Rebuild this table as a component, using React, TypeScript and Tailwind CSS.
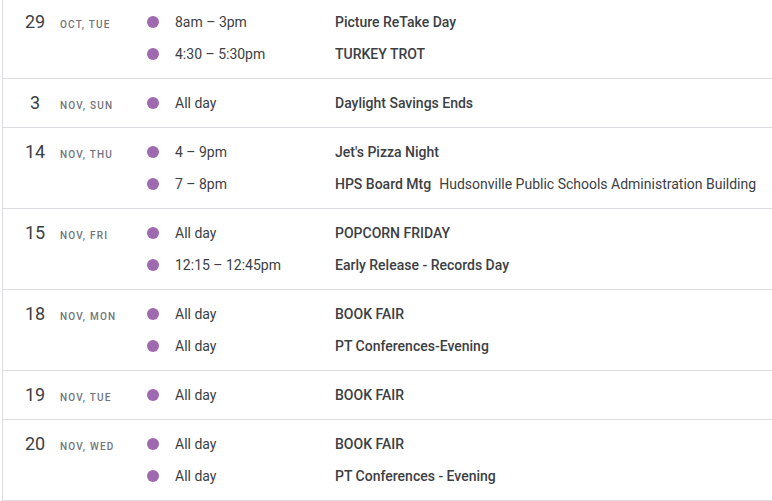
import React from "react";

type Ev = { time: string; title: string; location?: string };
type Day = { num: string; label: string; events: Ev[] };

const days: Day[] = [
  { num: "29", label: "Oct, Tue", events: [
    { time: "8am – 3pm", title: "Picture ReTake Day" },
    { time: "4:30 – 5:30pm", title: "TURKEY TROT" },
  ]},
  { num: "3", label: "Nov, Sun", events: [
    { time: "All day", title: "Daylight Savings Ends" },
  ]},
  { num: "14", label: "Nov, Thu", events: [
    { time: "4 – 9pm", title: "Jet's Pizza Night" },
    { time: "7 – 8pm", title: "HPS Board Mtg", location: "Hudsonville Public Schools Administration Building" },
  ]},
  { num: "15", label: "Nov, Fri", events: [
    { time: "All day", title: "POPCORN FRIDAY" },
    { time: "12:15 – 12:45pm", title: "Early Release - Records Day" },
  ]},
  { num: "18", label: "Nov, Mon", events: [
    { time: "All day", title: "BOOK FAIR" },
    { time: "All day", title: "PT Conferences-Evening" },
  ]},
  { num: "19", label: "Nov, Tue", events: [
    { time: "All day", title: "BOOK FAIR" },
  ]},
  { num: "20", label: "Nov, Wed", events: [
    { time: "All day", title: "BOOK FAIR" },
    { time: "All day", title: "PT Conferences - Evening" },
  ]},
];

export default function App() {
  return (
    <div className="w-[772px] h-[501px] overflow-hidden bg-white" style={{ fontFamily: "Roboto, 'Liberation Sans', sans-serif" }}>
      <div className="ml-[2px] -mt-[2px] border-l border-[#dadce0]">
        {days.map((d, i) => (
          <div key={i} className="flex border-b border-[#dadce0] py-2">
            <div className="w-[144px] shrink-0 flex items-baseline h-8 leading-8">
              <div className="ml-[19px] w-[26px] text-center text-[18px] text-[#3c4043]">{d.num}</div>
              <div className="ml-[12px] text-[10px] font-medium uppercase tracking-[1.2px] text-[#70757a]">{d.label}</div>
            </div>
            <div className="flex flex-col">
              {d.events.map((e, j) => (
                <div key={j} className="flex items-center h-8 text-[14px] text-[#3c4043]">
                  <div className="w-3 h-3 rounded-full bg-[#9e69af] shrink-0" />
                  <div className="ml-4 w-[160px] shrink-0">{e.time}</div>
                  <div className="whitespace-nowrap">
                    <span className="font-medium">{e.title}</span>
                    {e.location && <span className="ml-2">{e.location}</span>}
                  </div>
                </div>
              ))}
            </div>
          </div>
        ))}
      </div>
    </div>
  );
}
